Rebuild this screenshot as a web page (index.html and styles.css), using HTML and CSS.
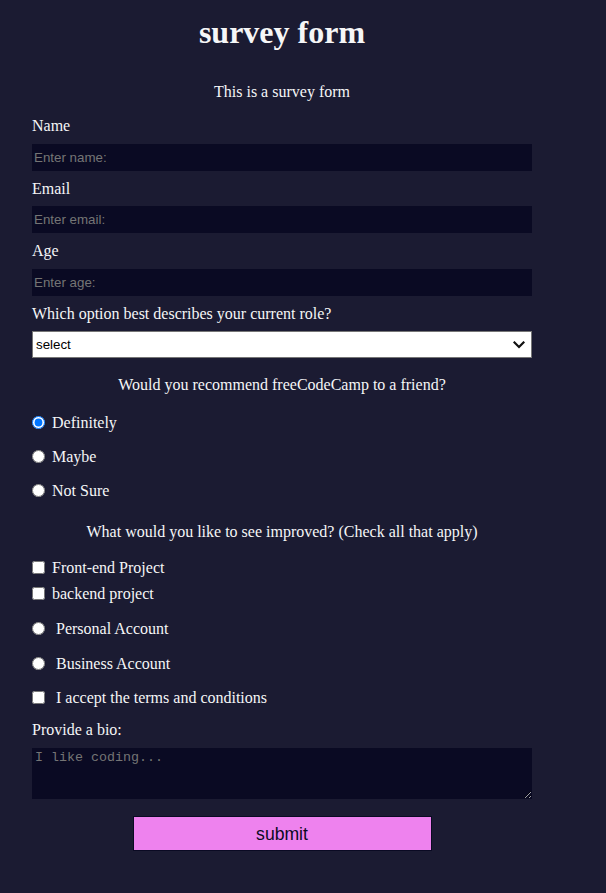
FILE: index.html
```html
<!DOCTYPE html>
<html lang="en">
<head>
<meta charset="utf-8">
<title>survey form</title>
<link rel="stylesheet" href="styles.css">
</head>
<body>
<main class="page">
  <h1 class="title">survey form</h1>
  <p class="desc">This is a survey form</p>
  <form class="survey">
    <label class="field-label first" for="name">Name</label>
    <input class="text-input" id="name" type="text" placeholder="Enter name:">
    <label class="field-label" for="email">Email</label>
    <input class="text-input" id="email" type="email" placeholder="Enter email:">
    <label class="field-label" for="age">Age</label>
    <input class="text-input" id="age" type="number" placeholder="Enter age:">
    <label class="field-label" for="role">Which option best describes your current role?</label>
    <div class="select-wrap">
      <select class="select-input" id="role">
        <option>select</option>
        <option>Student</option>
        <option>Full Time Job</option>
      </select>
      <svg class="chevron" width="12" height="8" viewBox="0 0 12 8" aria-hidden="true">
        <path d="M1.5 1.5 L6 6 L10.5 1.5" fill="none" stroke="#111111" stroke-width="2.2" stroke-linecap="square"/>
      </svg>
    </div>

    <p class="question q-recommend">Would you recommend freeCodeCamp to a friend?</p>
    <label class="choice choice-first"><input class="mark" type="radio" name="rec" checked> Definitely</label>
    <label class="choice choice-radio"><input class="mark" type="radio" name="rec"> Maybe</label>
    <label class="choice choice-radio"><input class="mark" type="radio" name="rec"> Not Sure</label>

    <p class="question q-improve">What would you like to see improved? (Check all that apply)</p>
    <label class="choice choice-check1"><input class="mark" type="checkbox"> Front-end Project</label>
    <label class="choice choice-check2"><input class="mark" type="checkbox"> backend project</label>
    <label class="choice choice-acct"><input class="mark mark-wide" type="radio" name="acct"> Personal Account</label>
    <label class="choice choice-acct"><input class="mark mark-wide" type="radio" name="acct"> Business Account</label>
    <label class="choice choice-terms"><input class="mark mark-wide" type="checkbox"> I accept the terms and conditions</label>

    <label class="field-label bio-label" for="bio">Provide a bio:</label>
    <textarea class="bio" id="bio" placeholder="I like coding..."></textarea>

    <button class="submit" type="submit">submit</button>
  </form>
</main>
</body>
</html>
```

FILE: styles.css
```css
html, body {
  margin: 0;
  padding: 0;
  background: #1b1b32;
}

body {
  color: #f5f6f7;
  font-family: "Liberation Serif", "Times New Roman", serif;
  font-size: 16px;
}

.page {
  width: 500px;
  margin-left: 32px;
  padding-top: 14.4px;
  padding-bottom: 41px;
  display: flex;
  flex-direction: column;
}

.title {
  margin: 0;
  font-size: 32px;
  line-height: 37px;
  font-weight: bold;
  text-align: center;
}

.desc {
  margin: 29.5px 0 0;
  height: 18px;
  line-height: 21px;
  text-align: center;
}

.survey {
  display: flex;
  flex-direction: column;
  margin: 0;
}

.field-label {
  display: block;
  height: 18px;
  line-height: 21px;
  margin: 0 0 10.5px;
}

.field-label.first {
  margin-top: 16.5px;
}

.text-input {
  box-sizing: border-box;
  height: 27px;
  margin: 0 0 7px;
  padding: 1px 2px;
  border: none;
  background: #0a0a23;
  color: #f5f6f7;
  font-family: "Liberation Sans", Arial, sans-serif;
  font-size: 13.333px;
  outline: none;
}

.text-input::placeholder,
.bio::placeholder {
  color: #757575;
}

.text-input::-webkit-outer-spin-button,
.text-input::-webkit-inner-spin-button {
  -webkit-appearance: none;
  margin: 0;
}

.select-wrap {
  position: relative;
  display: flex;
}

.select-input {
  flex: 1;
  box-sizing: border-box;
  height: 27px;
  margin: 0;
  border: 1px solid #767676;
  border-radius: 0;
  background: #ffffff;
  color: #000000;
  font-family: "Liberation Sans", Arial, sans-serif;
  font-size: 13.333px;
  padding: 0 0 0 3px;
  -webkit-appearance: none;
  appearance: none;
}

.chevron {
  position: absolute;
  right: 7px;
  top: 10px;
  pointer-events: none;
}

.question {
  margin: 0;
  height: 18px;
  line-height: 21px;
  text-align: center;
}

.q-recommend {
  margin-top: 16px;
}

.q-improve {
  margin-top: 23px;
}

.choice {
  display: flex;
  align-items: flex-start;
  height: 18px;
  line-height: 21px;
  white-space: pre;
}

.choice-first { margin-top: 20px; }
.choice-radio { margin-top: 16px; }
.choice-check1 { margin-top: 18px; }
.choice-check2 { margin-top: 8px; }
.choice-acct { margin-top: 17px; }
.choice-terms { margin-top: 16px; }

.mark {
  width: 13px;
  height: 13px;
  margin: 3.5px 3px 0 0;
  flex: none;
}

.mark-wide {
  margin-right: 7px;
}

.bio-label {
  margin-top: 14px;
  margin-bottom: 10.5px;
}

.bio {
  box-sizing: border-box;
  height: 51px;
  margin: 0;
  padding: 2px 3px;
  border: none;
  background: #0a0a23;
  color: #f5f6f7;
  font-family: "Liberation Mono", "Courier New", monospace;
  font-size: 13.333px;
  outline: none;
}

.submit {
  align-self: center;
  box-sizing: border-box;
  width: 299px;
  height: 35px;
  margin-top: 17.5px;
  border: 1px solid #0a0a23;
  background: #ee82ee;
  color: #0a0a23;
  font-family: "Liberation Sans", Arial, sans-serif;
  font-size: 17.6px;
  padding: 1px 0 0;
}
```
